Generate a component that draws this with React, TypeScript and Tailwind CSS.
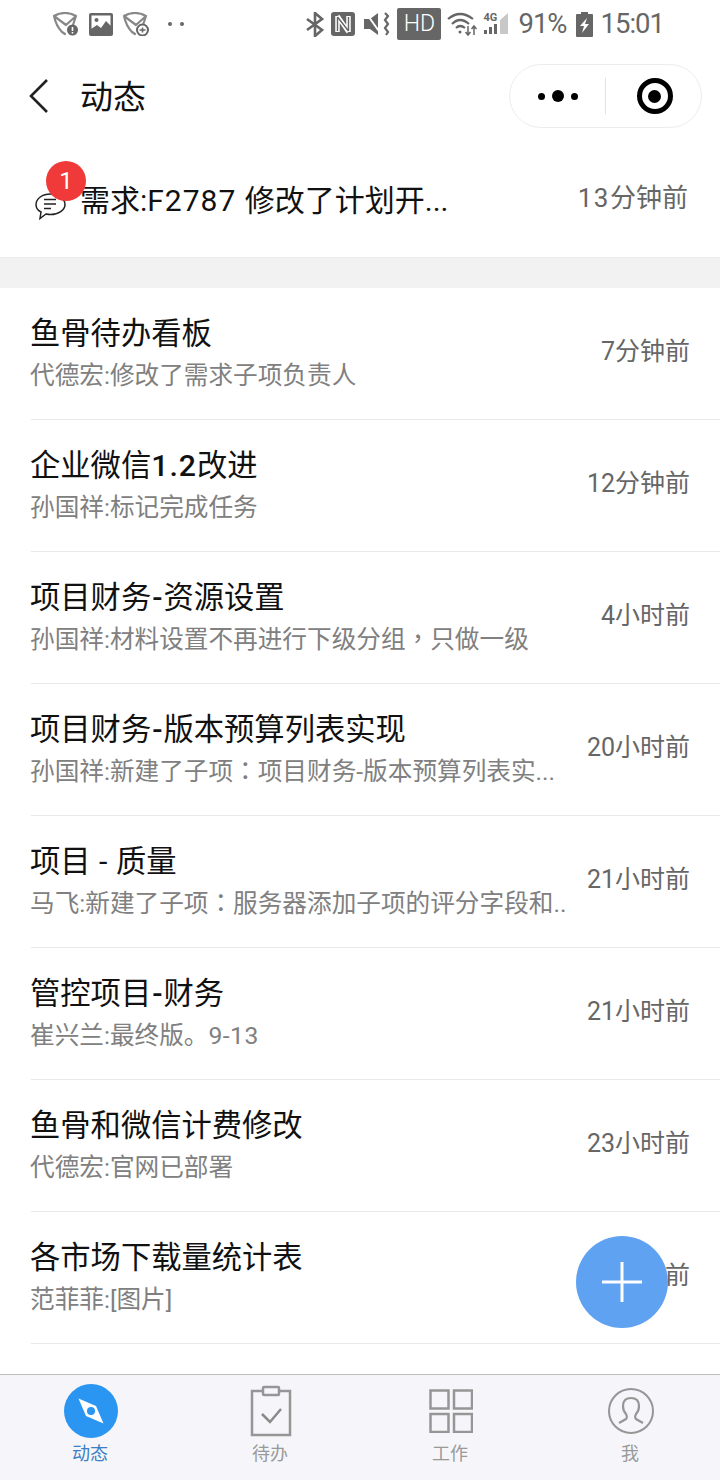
import type { ReactNode } from "react";

// fullwidth punctuation sits centred in the cell in the screenshot, the TC face does that
function Punc({ c }: { c: string }) {
  return <span className="font-['Noto_Sans_CJK_TC',sans-serif] leading-[0]">{c}</span>;
}

function Dash({ wide }: { wide?: boolean }) {
  return <span className={wide ? "mx-px font-medium" : "mx-px"}>-</span>;
}

const items: { id: number; title: ReactNode; sub: ReactNode; time: string }[] = [
  { id: 1, title: "鱼骨待办看板", sub: "代德宏:修改了需求子项负责人", time: "7分钟前" },
  { id: 2, title: <>企业微信<span className="font-medium tracking-[1px]">1.2</span>改进</>, sub: "孙国祥:标记完成任务", time: "12分钟前" },
  { id: 3, title: <>项目财务<Dash wide />资源设置</>, sub: <>孙国祥:材料设置不再进行下级分组<Punc c="，" />只做一级</>, time: "4小时前" },
  { id: 4, title: <>项目财务<Dash wide />版本预算列表实现</>, sub: <>孙国祥:新建了子项<Punc c="：" />项目财务-版本预算列表实...</>, time: "20小时前" },
  { id: 5, title: <>项目 <Dash /> 质量</>, sub: <>马飞:新建了子项<Punc c="：" />服务器添加子项的评分字段和..</>, time: "21小时前" },
  { id: 6, title: <>管控项目<Dash wide />财务</>, sub: <>崔兴兰:最终版。<span className="tracking-[0.5px]">9-13</span></>, time: "21小时前" },
  { id: 7, title: "鱼骨和微信计费修改", sub: "代德宏:官网已部署", time: "23小时前" },
  { id: 8, title: "各市场下载量统计表", sub: "范菲菲:[图片]", time: "23小时前" },
];

function MailIcon({ kind }: { kind: "alert" | "plus" }) {
  return (
    <svg width="26" height="24" viewBox="0 0 26 24" fill="none">
      <path d="M1 4 Q6 1 12 1 Q18 1 23 4 L20 13 M1 4 L13 13 L23 4 M1 4 Q3 14 9 20 L12 22" stroke="#888" strokeWidth="2.200" strokeLinejoin="round" strokeLinecap="round" />
      <circle cx="19.500" cy="18" r="5.500" fill={kind === "alert" ? "#666" : "#fff"} stroke="#666" strokeWidth={kind === "alert" ? 0 : 2} />
      {kind === "alert" ? (
        <path d="M19.500 15v4M19.500 20v1.500" stroke="#fff" strokeWidth="1.600" />
      ) : (
        <path d="M16.500 18h6M19.500 15.500v5" stroke="#666" strokeWidth="1.600" />
      )}
    </svg>
  );
}

function StatusBar() {
  return (
    <div className="flex h-12 shrink-0 items-center pl-[53px] pr-[56px] text-[#666]">
      <div className="flex items-center gap-[10px]">
        <MailIcon kind="alert" />
        <svg width="24" height="23" viewBox="0 0 24 23">
          <rect width="24" height="23" rx="2" fill="#666" />
          <rect x="2.500" y="2.500" width="19" height="18" fill="#fff" />
          <circle cx="7.500" cy="7" r="2" fill="#666" />
          <path d="M2 21 L2 16 L8 12 L12 15 L17 8 L22 13 L22 21Z" fill="#666" />
        </svg>
        <MailIcon kind="plus" />
        <div className="ml-[9px] flex gap-[8px]">
          <span className="h-1 w-1 rounded-full bg-[#666]" />
          <span className="h-1 w-1 rounded-full bg-[#666]" />
        </div>
      </div>
      <div className="ml-auto flex items-center">
        <svg width="18" height="25" viewBox="0 0 18 25" fill="none" stroke="#666" strokeWidth="2.600">
          <path d="M1 7 L16 18 L9 24 L9 1 L16 7 L1 18" />
        </svg>
        <svg className="ml-[7px]" width="24" height="24" viewBox="0 0 24 24">
          <rect width="24" height="24" rx="3" fill="#666" />
          <path d="M6.500 4v16M6.500 4l11 16M17.500 4v16" stroke="#fff" strokeWidth="4.500" fill="none" />
          <path d="M6.500 5v14M6.500 5l11 14M17.500 5v14" stroke="#666" strokeWidth="1.400" fill="none" />
        </svg>
        <svg className="ml-[9px]" width="26" height="24" viewBox="0 0 26 24">
          <path d="M0 7h6l8-6v22l-8-6H0z" fill="#666" />
          <path d="M2 1l15 21" stroke="#fff" strokeWidth="2" />
          <path d="M21 1l3 3-3 4 3 4-3 4 3 4-2 3" stroke="#666" strokeWidth="2.200" fill="none" />
        </svg>
        <div className="ml-[7px] flex h-8 w-[44px] items-center justify-center rounded-[2px] bg-[#666] font-['Roboto'] text-[23px] font-light text-white">HD</div>
        <svg className="ml-[6px]" width="30" height="26" viewBox="0 0 30 26" fill="none" stroke="#666" strokeWidth="2.200">
          <path d="M1 8 Q13 -2 26 8" />
          <path d="M5 13 Q13 5 22 13" />
          <path d="M9 17 Q13 13 18 17" />
          <circle cx="13" cy="21" r="1.500" fill="#666" stroke="none" />
          <path d="M21 15v8M18.500 21l2.500 3 2.500-3" strokeWidth="1.500" />
          <path d="M27 24v-8M24.500 18l2.500-3 2.500 3" strokeWidth="1.500" />
        </svg>
        <div className="relative ml-[6px] h-7 w-[25px]">
          <svg className="absolute inset-0" width="25" height="28" viewBox="0 0 25 28">
            <path d="M25 3 V24 H17 V10 Z" fill="#c8c8c8" />
            <rect x="1" y="20" width="3" height="4" fill="#666" />
            <rect x="6" y="17" width="3" height="7" fill="#666" />
            <rect x="11" y="14" width="3" height="10" fill="#666" />
          </svg>
          <span className="absolute left-0 top-[2px] font-['Roboto'] text-[11px] font-bold leading-none text-[#666]">4G</span>
        </div>
        <span className="ml-[10px] font-['Roboto'] text-[27.5px] leading-none tracking-[-1px]">91%</span>
        <svg className="ml-[9px]" width="17" height="25" viewBox="0 0 17 25">
          <rect x="5" y="0" width="7" height="3" fill="#666" />
          <rect x="0" y="2" width="17" height="23" rx="1" fill="#666" />
          <path d="M11 6 L4 14 H8 L6 21 L13 12 H9 Z" fill="#fff" />
        </svg>
        <span className="ml-[8px] font-['Roboto'] text-[27.5px] leading-none tracking-[-1px]">15:01</span>
      </div>
    </div>
  );
}

function Capsule() {
  return (
    <div className="flex h-[64px] w-[193px] items-center rounded-full border border-[#ededed] bg-white">
      <div className="flex w-[95px] items-center justify-center gap-[7px]">
        <span className="h-[7px] w-[7px] rounded-full bg-black" />
        <span className="h-[12px] w-[12px] rounded-full bg-black" />
        <span className="h-[7px] w-[7px] rounded-full bg-black" />
      </div>
      <div className="h-[36px] w-px bg-[#e2e2e2]" />
      <div className="flex flex-1 items-center justify-center pl-[2px]">
        <div className="flex h-[36px] w-[36px] items-center justify-center rounded-full border-[5px] border-black">
          <span className="h-[13px] w-[13px] rounded-full bg-black" />
        </div>
      </div>
    </div>
  );
}

function ListRow({ title, sub, time }: { title: ReactNode; sub: ReactNode; time: string }) {
  return (
    <div className="ml-[31px] flex h-[132px] shrink-0 items-center border-b border-[#e8e8e8] pr-[30px]">
      <div className="-ml-px min-w-0 flex-1 pt-[2px]">
        <div className="h-[38px] text-[30.3px] leading-[38px] text-[#111]">{title}</div>
        <div className="mt-[5px] h-[36px] whitespace-nowrap text-[24.65px] leading-[36px] text-[#808080]">{sub}</div>
      </div>
      <div className="mb-[4px] shrink-0 text-[25px] leading-[36px] text-[#666]">{time}</div>
    </div>
  );
}

function TabItem({ icon, label, active }: { icon: ReactNode; label: string; active?: boolean }) {
  return (
    <div className="flex w-[180px] flex-col items-center pt-[9px]">
      <div className="ml-[2px] flex h-[54px] items-center justify-center">{icon}</div>
      <div className={`mt-[4px] text-[18px] leading-[24px] ${active ? "text-[#3b7fc4]" : "text-[#999]"}`}>{label}</div>
    </div>
  );
}

export default function App() {
  return (
    <div className="relative flex h-[1480px] w-[720px] flex-col overflow-hidden bg-white font-['Roboto','Noto_Sans_CJK_SC',sans-serif]">
      <StatusBar />

      <div className="flex h-[96px] shrink-0 items-center pr-[18px]">
        <svg className="ml-[29px]" width="20" height="34" viewBox="0 0 20 34" fill="none" stroke="#222" strokeWidth="2.600">
          <path d="M18 1 L2 17 L18 33" />
        </svg>
        <span className="ml-[31px] mt-[3px] text-[33px] leading-none text-[#111]">动态</span>
        <div className="ml-auto">
          <Capsule />
        </div>
      </div>

      <div className="flex h-[113px] shrink-0 items-center pr-[32px]">
        <div className="relative ml-[35px] h-[30px] w-[45px]">
          <svg className="absolute left-0 top-[7px]" width="31" height="27" viewBox="0 0 31 27" fill="none" stroke="#222" strokeWidth="1.500">
            <path d="M15.500 1C7.500 1 1 5.500 1 11.500c0 3.500 2 6 5 7.500l-1 6.500 6-4.500c1.500.3 3 .5 4.500.5 8 0 14.500-4.500 14.500-10S23.500 1 15.500 1z" />
            <path d="M9 6.500h12M9 11h12M9 15.500h7" />
          </svg>
          <div className="absolute left-[11px] top-[-25px] flex h-10 w-10 items-center justify-center rounded-full bg-[#f03a3a] text-[24px] leading-none text-white">1</div>
        </div>
        <span className="text-[30px] leading-none text-[#111]">需求:<span className="tracking-[1px]">F2787 </span>修改了计划开...</span>
        <span className="mb-[6px] ml-auto text-[26px] leading-none text-[#666]"><span className="tracking-[1.5px]">13</span>分钟前</span>
      </div>

      <div className="h-[31px] shrink-0 border-t border-[#ebebeb] bg-[#f2f2f2]" />

      <div className="flex min-h-0 flex-1 flex-col">
        {items.map((item) => (
          <ListRow key={item.id} title={item.title} sub={item.sub} time={item.time} />
        ))}
      </div>

      <div className="flex h-[106px] shrink-0 border-t border-[#bdbdbd] bg-[#f6f6fa]">
        <TabItem
          active
          label="动态"
          icon={
            <svg width="54" height="54" viewBox="0 0 54 54">
              <circle cx="27" cy="27" r="27" fill="#2b95f2" />
              <path d="M14.500 14.500 L32 22 L39.500 39.500 L22 32Z" fill="#fff" />
              <circle cx="27" cy="27" r="4" fill="#2b95f2" />
            </svg>
          }
        />
        <TabItem
          label="待办"
          icon={
            <svg width="42" height="52" viewBox="0 0 42 52" fill="none" stroke="#969696" strokeWidth="2.500">
              <path d="M13 6H2v44h38V6H29" />
              <rect x="13" y="2" width="16" height="8" rx="1" />
              <path d="M12 29l8 8 11-13" stroke="#8a8a8a" />
            </svg>
          }
        />
        <TabItem
          label="工作"
          icon={
            <svg width="44" height="44" viewBox="0 0 44 44" fill="none" stroke="#969696" strokeWidth="2.500">
              <rect x="1.500" y="1.500" width="18" height="18" />
              <rect x="25" y="1.500" width="18" height="18" />
              <rect x="1.500" y="25" width="18" height="18" />
              <rect x="25" y="25" width="18" height="18" />
            </svg>
          }
        />
        <TabItem
          label="我"
          icon={
            <svg width="46" height="46" viewBox="0 0 46 46" fill="none" stroke="#969696" strokeWidth="2">
              <circle cx="23" cy="23" r="22" />
              <path d="M11 35l7-4c1-1 1-3 0-5-2-2-3-5-3-8 0-5 3-8 8-8s8 3 8 8c0 3-1 6-3 8-1 2-1 4 0 5l7 4" strokeWidth="2.200" />
            </svg>
          }
        />
      </div>

      <div className="absolute left-[576px] top-[1236px] flex h-[92px] w-[92px] items-center justify-center rounded-full bg-[#5fa2f2]">
        <svg width="40" height="40" viewBox="0 0 40 40" stroke="#fff" strokeWidth="3">
          <path d="M0 20h40M20 0v40" />
        </svg>
      </div>
    </div>
  );
}
